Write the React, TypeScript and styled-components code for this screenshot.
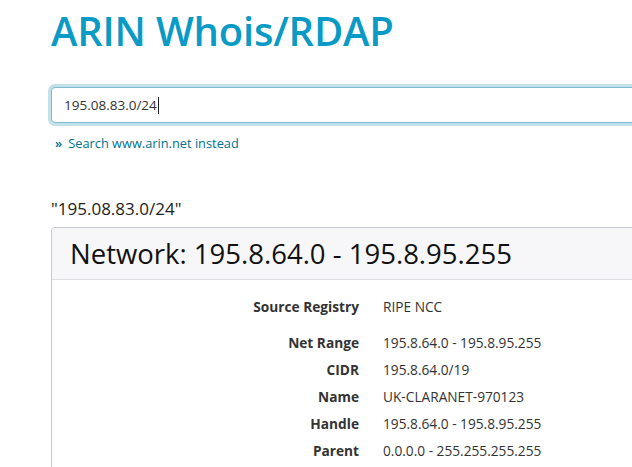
import { FC } from "react";
import styled, { createGlobalStyle } from "styled-components";

const GlobalStyle = createGlobalStyle`
  html, body {
    margin: 0;
    padding: 0;
    background: #fff;
    overflow: hidden;
  }
  body {
    font-family: "Open Sans", "Noto Sans", sans-serif;
    color: #333;
  }
`;

type Field = { label: string; value: string; spaced?: boolean };

const fields: Field[] = [
  { label: "Source Registry", value: "RIPE NCC", spaced: true },
  { label: "Net Range", value: "195.8.64.0 - 195.8.95.255" },
  { label: "CIDR", value: "195.8.64.0/19" },
  { label: "Name", value: "UK-CLARANET-970123" },
  { label: "Handle", value: "195.8.64.0 - 195.8.95.255" },
  { label: "Parent", value: "0.0.0.0 - 255.255.255.255" },
];

const query = "195.08.83.0/24";

const App: FC = () => {
  return (
    <Page>
      <GlobalStyle />
      <Title>ARIN Whois/RDAP</Title>
      <SearchBox>
        <SearchText>{query}</SearchText>
        <Caret />
      </SearchBox>
      <AltLink href="#">
        <Chevrons>»</Chevrons>Search www.arin.net instead
      </AltLink>
      <QueryEcho>"{query}"</QueryEcho>
      <Card>
        <CardHeader>Network: 195.8.64.0 - 195.8.95.255</CardHeader>
        <CardBody>
          {fields.map((f) => (
            <FieldRow key={f.label} spaced={f.spaced}>
              <FieldLabel>{f.label}</FieldLabel>
              <FieldValue>{f.value}</FieldValue>
            </FieldRow>
          ))}
        </CardBody>
      </Card>
    </Page>
  );
};

export default App;

const Page = styled.div`
  width: 900px;
  padding: 8px 0 0 51px;
`;

const Title = styled.h1`
  margin: 0;
  font-family: "Open Sans", sans-serif;
  font-size: 40px;
  font-weight: 600;
  line-height: 46px;
  color: #0a9ac6;
  letter-spacing: -0.2px;
`;

const SearchBox = styled.div`
  margin-top: 33px;
  height: 34px;
  display: flex;
  align-items: center;
  padding: 0 12px;
  border: 1px solid #7fbdd1;
  border-radius: 4px;
  box-shadow: 0 0 0 3px #c3e1e8;
  background: #fff;
`;

const SearchText = styled.span`
  font-size: 13.5px;
  color: #333;
`;

const Caret = styled.span`
  width: 1px;
  height: 17px;
  margin-left: 1px;
  background: #222;
`;

const AltLink = styled.a`
  display: flex;
  align-items: center;
  margin: 11px 0 0 4px;
  font-size: 12.8px;
  color: #03708f;
  text-decoration: none;
`;

const Chevrons = styled.span`
  font-weight: 600;
  font-size: 13px;
  margin-right: 6px;
`;

const QueryEcho = styled.div`
  margin-top: 46px;
  font-size: 17px;
  color: #222;
  line-height: 21px;
`;

const Card = styled.div`
  margin-top: 8px;
  border: 1px solid #c6ccd2;
  border-radius: 4px;
`;

const CardHeader = styled.div`
  height: 51px;
  padding: 0 18px;
  display: flex;
  align-items: center;
  background: #f7f7f9;
  border-bottom: 1px solid #dcdfe2;
  border-radius: 4px 4px 0 0;
  font-size: 27.5px;
  color: #111;
`;

const CardBody = styled.div`
  padding: 17px 0 20px;
  display: grid;
  grid-auto-rows: auto;
`;

const FieldRow = styled.div<{ spaced?: boolean }>`
  display: grid;
  grid-template-columns: 307px 1fr;
  column-gap: 24px;
  height: ${(p) => (p.spaced ? "36px" : "27px")};
  align-items: start;
  font-size: 13.7px;
  line-height: 20px;
`;

const FieldLabel = styled.span`
  text-align: right;
  font-weight: 700;
  color: #333;
`;

const FieldValue = styled.span`
  color: #333;
`;
